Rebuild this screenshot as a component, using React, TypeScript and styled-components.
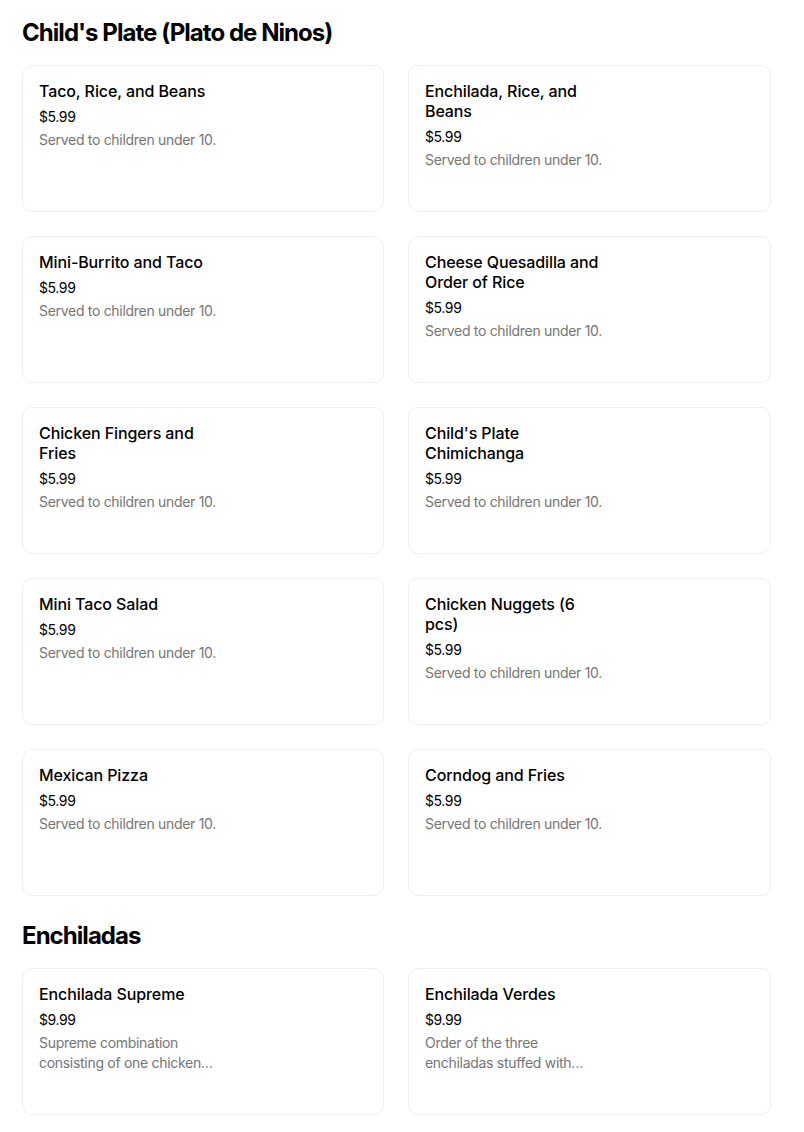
import React from 'react';
import { createGlobalStyle, styled } from 'styled-components';

type Item = { name: string; price: string; description: string };

const kidsNote = 'Served to children under 10.';

const sections: { title: string; items: Item[] }[] = [
  {
    title: "Child's Plate (Plato de Ninos)",
    items: [
      { name: 'Taco, Rice, and Beans', price: '$5.99', description: kidsNote },
      { name: 'Enchilada, Rice, and Beans', price: '$5.99', description: kidsNote },
      { name: 'Mini-Burrito and Taco', price: '$5.99', description: kidsNote },
      { name: 'Cheese Quesadilla and Order of Rice', price: '$5.99', description: kidsNote },
      { name: 'Chicken Fingers and Fries', price: '$5.99', description: kidsNote },
      { name: "Child's Plate Chimichanga", price: '$5.99', description: kidsNote },
      { name: 'Mini Taco Salad', price: '$5.99', description: kidsNote },
      { name: 'Chicken Nuggets (6 pcs)', price: '$5.99', description: kidsNote },
      { name: 'Mexican Pizza', price: '$5.99', description: kidsNote },
      { name: 'Corndog and Fries', price: '$5.99', description: kidsNote },
    ],
  },
  {
    title: 'Enchiladas',
    items: [
      {
        name: 'Enchilada Supreme',
        price: '$9.99',
        description: 'Supreme combination consisting of one chicken…',
      },
      {
        name: 'Enchilada Verdes',
        price: '$9.99',
        description: 'Order of the three enchiladas stuffed with…',
      },
    ],
  },
];

const GlobalStyle = createGlobalStyle`
  body {
    margin: 0;
    background: #ffffff;
    color: #000000;
    font-family: Inter, "Liberation Sans", sans-serif;
  }
`;

const Page = styled.main`
  display: flex;
  flex-direction: column;
  gap: 24px;
  width: 749px;
  padding: 17px 0 0 22px;
`;

const Section = styled.section`
  display: flex;
  flex-direction: column;
  gap: 16px;
`;

const SectionTitle = styled.h2`
  margin: 0;
  font-size: 24px;
  line-height: 32px;
  font-weight: 700;
  letter-spacing: -0.95px;
`;

const Grid = styled.ul`
  list-style: none;
  margin: 0;
  padding: 0;
  display: grid;
  grid-template-columns: 362px 363px;
  gap: 24px;
`;

const Card = styled.li`
  box-sizing: border-box;
  min-height: 147px;
  padding: 15px 16px 16px;
  border: 1px solid #efefef;
  border-radius: 10px;
  background: #ffffff;
`;

const Info = styled.div`
  display: flex;
  flex-direction: column;
  max-width: 182px;
`;

const Name = styled.div`
  font-size: 16px;
  line-height: 20px;
  font-weight: 500;
  letter-spacing: -0.1px;
  color: #000000;
`;

const Price = styled.div`
  margin-top: 6px;
  font-size: 14px;
  line-height: 20px;
  letter-spacing: -0.4px;
  color: #000000;
`;

const Description = styled.div`
  margin-top: 3px;
  font-size: 14px;
  line-height: 20px;
  letter-spacing: -0.3px;
  color: #757575;
`;

const App: React.FC = () => {
  return (
    <>
      <GlobalStyle />
      <Page>
        {sections.map((section) => (
          <Section key={section.title}>
            <SectionTitle>{section.title}</SectionTitle>
            <Grid>
              {section.items.map((item) => (
                <Card key={item.name}>
                  <Info>
                    <Name>{item.name}</Name>
                    <Price>{item.price}</Price>
                    <Description>{item.description}</Description>
                  </Info>
                </Card>
              ))}
            </Grid>
          </Section>
        ))}
      </Page>
    </>
  );
};

export default App;
